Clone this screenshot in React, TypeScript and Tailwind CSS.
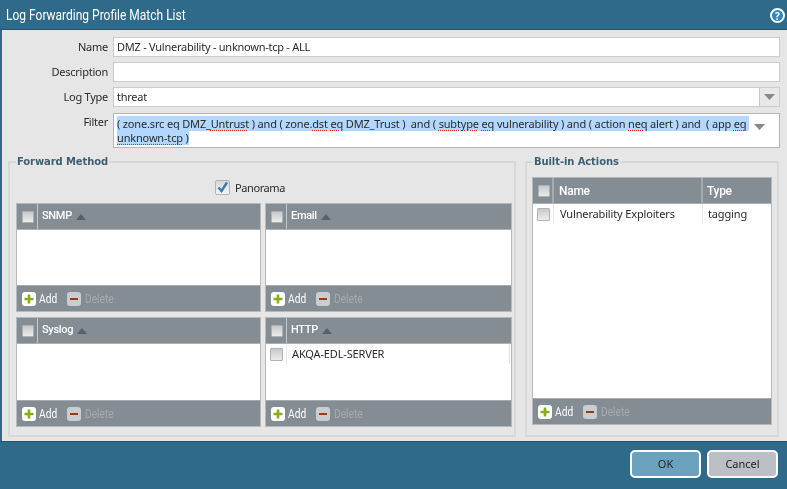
import React from "react";

const font = "font-['Noto_Sans','DejaVu_Sans',sans-serif]";

function Check({ className = "" }: { className?: string }) {
  return <span className={"block w-[12px] h-[12px] shrink-0 rounded-[1px] border border-[#aeb2b5] bg-gradient-to-b from-[#c6c9cb] to-[#ececec] " + className} />;
}

function AddDelete() {
  return (
    <div className="h-[26px] shrink-0 bg-[#858d94] border-t border-[#a4aaaf] flex items-center pl-[5px] text-[12px] leading-none font-['Roboto',sans-serif]">
      <span className="w-[14px] h-[14px] rounded-[3px] bg-white flex items-center justify-center">
        <svg width="10" height="10" viewBox="0 0 10 10"><path d="M5 0.5v9M0.5 5h9" stroke="#8cab1c" strokeWidth="2.6" /></svg>
      </span>
      <span className="ml-[3px] w-[18px] text-white origin-left scale-x-[0.85]">Add</span>
      <span className="ml-[10px] w-[14px] h-[14px] rounded-[3px] bg-[#c9cdd0] flex items-center justify-center">
        <svg width="10" height="10" viewBox="0 0 10 10"><path d="M1 5h8" stroke="#9c3a17" strokeWidth="2" /></svg>
      </span>
      <span className="ml-[4px] text-[#a6abb0] origin-left scale-x-[0.85]">Delete</span>
    </div>
  );
}

function SortUp() {
  return <svg className="ml-[4px]" width="10" height="6" viewBox="0 0 10 6"><path d="M5 0L10 6H0z" fill="#56626b" /></svg>;
}

function Panel({ title, row }: { title: string; row?: string }) {
  return (
    <div className="flex flex-col border border-[#b6babd] bg-white min-h-0">
      <div className="h-[26px] shrink-0 bg-[#858d94] flex items-center border-b border-[#aab0b4]">
        <div className="w-[21px] h-full flex items-center justify-center border-r border-[#c5c9cc] pl-[1px]">
          <Check />
        </div>
        <span className="ml-[4px] text-white text-[11px] font-medium tracking-[-0.3px] font-['Roboto',sans-serif]">{title}</span>
        <SortUp />
      </div>
      <div className="flex-1">
        {row && (
          <div className="h-[20px] flex items-center text-[11px] tracking-[-0.15px] text-[#2a2a2a] border-r border-[#e3e3e3] mr-[1px]">
            <div className="w-[21px] h-full flex items-center justify-center border-r border-[#e8e8e8]">
              <Check className="w-[13px] h-[13px]" />
            </div>
            <span className="ml-[5px]">{row}</span>
          </div>
        )}
      </div>
      <AddDelete />
    </div>
  );
}

function Bad({ children }: { children: React.ReactNode }) {
  return <span className="underline decoration-dotted decoration-[#e02020] underline-offset-[2px]">{children}</span>;
}

function Label({ children }: { children: React.ReactNode }) {
  return <div className="text-right text-[11px] tracking-[-0.25px] text-[#2a2a2a] leading-[20px]">{children}</div>;
}

function Input({ children, arrow }: { children?: React.ReactNode; arrow?: boolean }) {
  return (
    <div className="h-[20px] bg-white border border-[#cbcbcb] flex items-center text-[11px] tracking-[-0.25px] text-[#2a2a2a]">
      <span className="pl-[3px] flex-1">{children}</span>
      {arrow && (
        <span className="w-[20px] h-full bg-[#e8e8e8] border-l border-[#c9c9c9] flex items-center justify-center">
          <svg width="11" height="6" viewBox="0 0 11 6"><path d="M0 0h11L5.5 6z" fill="#7f8a93" /></svg>
        </span>
      )}
    </div>
  );
}

function Group({ title, className, children }: { title: string; className: string; children: React.ReactNode }) {
  return (
    <div className={"relative border-2 border-[#d8d8d8] " + className}>
      <div className="absolute top-[-8px] left-[6px] px-[1px] bg-[#e6e6e6] text-[10px] leading-[14px] font-bold text-[#3f5f73] font-['DejaVu_Sans',sans-serif] tracking-[-0.1px]">{title}</div>
      {children}
    </div>
  );
}

export default function App() {
  return (
    <div className={"w-[787px] h-[489px] bg-[#306a8a] flex flex-col overflow-hidden blur-[0.3px] " + font}>
      <div className="h-[30px] shrink-0 flex items-center justify-between pt-[2px] pl-[6px] pr-[2px] border-b border-[#1d587a]">
        <span className="text-white text-[15px] leading-none font-['Roboto',sans-serif] origin-left scale-x-[0.8] whitespace-nowrap">Log Forwarding Profile Match List</span>
        <span className="w-[15px] h-[15px] rounded-full border-2 border-white bg-[#2f86c0] text-white text-[10px] font-bold leading-none flex items-center justify-center">?</span>
      </div>
      <div className="ml-[2px] h-[411px] shrink-0 bg-[#e6e6e6] flex flex-col">
        <div className="grid grid-cols-[106px_1fr] gap-x-[5px] gap-y-[5px] pt-[7px] pr-[7px]">
          <Label>Name</Label>
          <Input>DMZ - Vulnerability - unknown-tcp - ALL</Input>
          <Label>Description</Label>
          <Input />
          <Label>Log Type</Label>
          <Input arrow>threat</Input>
          <Label>Filter</Label>
          <div className="relative h-[35px] mt-[1px] bg-white border border-[#b5b5b5] pl-[3px] pt-[3px] text-[11px] tracking-[-0.165px] leading-[14px] text-[#2a2a2a]">
            <div className="w-[640px] whitespace-pre">
              <span className="bg-[#b3d7ff]">( zone.<Bad>src</Bad> <Bad>eq</Bad> DMZ_<Bad>Untrust</Bad> ) and ( zone.<Bad>dst</Bad> <Bad>eq</Bad> DMZ_Trust )  and ( <Bad>subtype</Bad> <Bad>eq</Bad> vulnerability ) and ( action <Bad>neq</Bad> alert ) and  ( app <Bad>eq</Bad> {"\n"}<Bad>unknown-tcp</Bad> )</span>
            </div>
            <svg className="absolute right-[14px] top-[10px]" width="11" height="6" viewBox="0 0 11 6"><path d="M0 0h11L5.5 6z" fill="#7f8a93" /></svg>
          </div>
        </div>
        <div className="flex gap-[9px] ml-[6px] mt-[13px] h-[276px]">
          <Group title="Forward Method" className="w-[508px] pl-[6px] flex flex-col">
            <div className="h-[40px] shrink-0 flex items-start justify-center pt-[17px] pr-[30px] text-[11px] tracking-[-0.4px] text-[#2a2a2a]">
              <span className="w-[15px] h-[15px] rounded-[2px] border border-[#aeb4b8] bg-gradient-to-b from-[#d4d8db] to-[#f4f4f4] flex items-center justify-center mr-[5px]">
                <svg width="13" height="13" viewBox="0 0 13 13"><path d="M2.5 6.5l3 3.5L11 1.5" fill="none" stroke="#3d7ba3" strokeWidth="2.4" /></svg>
              </span>
              <span className="leading-[15px]">Panorama</span>
            </div>
            <div className="grid grid-cols-[245px_247px] grid-rows-[109px_110px] gap-x-[4px] gap-y-[5px]">
              <Panel title="SNMP" />
              <Panel title="Email" />
              <Panel title="Syslog" />
              <Panel title="HTTP" row="AKQA-EDL-SERVER" />
            </div>
          </Group>
          <Group title="Built-in Actions" className="w-[254px] pl-[5px] pt-[14px] pr-[5px] pb-[10px] flex">
            <div className="flex-1 flex flex-col border border-[#b6babd] bg-white">
              <div className="h-[26px] shrink-0 bg-[#858d94] flex items-center border-b border-[#aab0b4] text-white text-[12px] font-medium font-['Roboto',sans-serif]">
                <div className="w-[21px] h-full flex items-center justify-center border-r-2 border-[#a6acb1] pl-[2px]">
                  <Check />
                </div>
                <div className="w-[149px] h-full flex items-center pl-[5px] border-r-2 border-[#a6acb1] tracking-[-0.3px]">Name</div>
                <div className="pl-[4px] tracking-[-0.3px]">Type</div>
              </div>
              <div className="flex-1">
                <div className="h-[20px] flex items-center text-[11px] tracking-[-0.15px] text-[#2a2a2a]">
                  <div className="w-[21px] h-full flex items-center justify-center border-r border-[#e8e8e8]">
                    <Check className="w-[13px] h-[13px]" />
                  </div>
                  <div className="w-[149px] h-full flex items-center pl-[6px] border-r border-[#e8e8e8]">Vulnerability Exploiters</div>
                  <div className="pl-[5px]">tagging</div>
                </div>
              </div>
              <AddDelete />
            </div>
          </Group>
        </div>
      </div>
      <div className="flex-1 flex justify-end items-start gap-[6px] pt-[8px] pr-[9px] border-t border-[#1d587a]">
        <button className="w-[71px] h-[28px] rounded-[5px] border-2 border-white bg-[#6ba3bf] text-[11px] text-[#222]">OK</button>
        <button className="w-[71px] h-[28px] rounded-[5px] border-2 border-white bg-[#bcbfc6] text-[11px] text-[#222]">Cancel</button>
      </div>
    </div>
  );
}
